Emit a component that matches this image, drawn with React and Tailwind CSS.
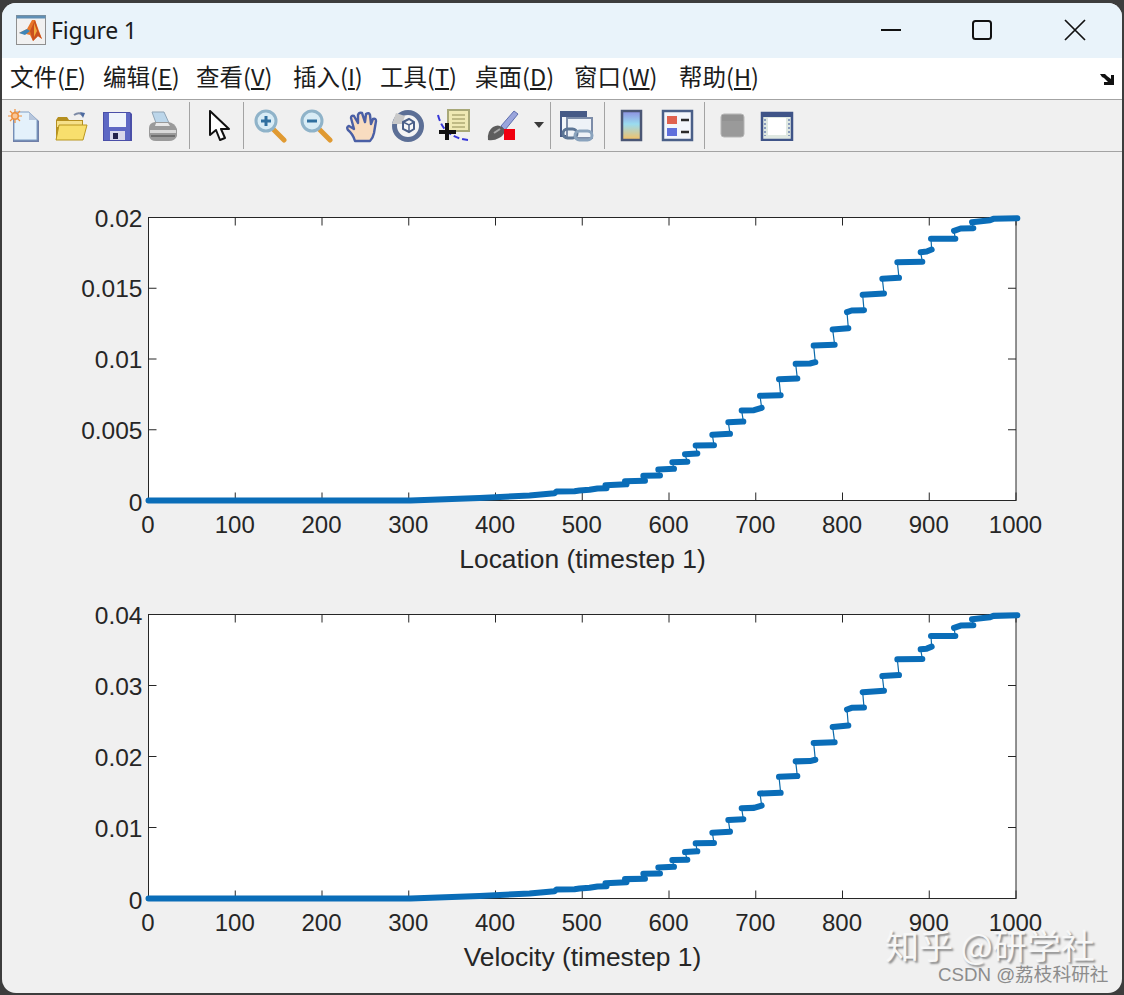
import React from 'react'

const boxW = 867.5

// step runs of the curve, measured off the picture
const upper = [
  [[75, 843], [135, 842]],
  [[130, 827], [180, 826]],
  [[175, 808], [222, 806]],
  [[217, 786], [262, 785]],
  [[255, 762], [292, 760]],
  [[287, 736], [342, 735]],
  [[337, 704], [390, 701]],
  [[385, 666], [430, 664]],
  [[425, 631], [462, 630], [485, 623]],
  [[480, 587], [542, 585]],
  [[537, 537], [592, 535]],
  [[587, 491], [630, 490], [646, 486]],
  [[641, 436], [704, 434]],
  [[698, 388], [745, 384]],
  [[741, 336], [755, 331], [792, 330]],
  [[788, 284], [852, 280]],
  [[847, 236], [897, 233]],
  [[892, 186], [967, 185]],
  [[962, 156], [980, 154], [995, 148]],
  [[993, 116], [1066, 116]],
  [[1062, 92], [1082, 85], [1120, 84]],
  [[1116, 66], [1170, 60], [1180, 56], [1252, 54]],
].map(run => run.map(([x, y]) => [x / 3 + 451.5, y / 3 - 17.3]))

const lower = [
  [[0, 283], [262, 283], [331, 280.6], [381, 277.9], [406, 275.7], [408, 274], [426, 273.7], [431, 273], [441, 272.3], [449, 271], [458, 270.8]],
  [[457, 267.8], [478, 266.8]],
]

const steps = [...lower, ...upper]

const toPoints = run => run.map(p => p.join(',')).join(' ')

function Plot({ labels, xlabel, top, height, boxH, xlabelX }) {
  const yTicks = [0, 1, 2, 3, 4].map(i => (i * boxH) / 4)
  const xTicks = [0, 100, 200, 300, 400, 500, 600, 700, 800, 900, 1000]
  const thin = steps.map(toPoints).join(' ')
  const sy = boxH / 283
  return (
    <svg width="1120" height={height} viewBox={`0 0 1120 ${height}`} className="block shrink-0">
      <g transform={`translate(146.5 ${top})`} style={{ fontFamily: '"Liberation Sans", Arial, sans-serif' }}>
        <rect x="0" y="0" width={boxW} height={boxH} fill="#ffffff" stroke="#262626" strokeWidth="1" />
        {xTicks.map(t => {
          const x = (t / 1000) * boxW
          return (
            <g key={t}>
              <path d={`M${x} 0v8M${x} ${boxH}v-8`} stroke="#262626" strokeWidth="1" />
              <text x={x - 0.5} y={boxH + 32.5} textAnchor="middle" fontSize="24" fill="#262626">{t}</text>
            </g>
          )
        })}
        {yTicks.map((y, i) => (
          <g key={i}>
            <path d={`M0 ${y}h8M${boxW} ${y}h-8`} stroke="#262626" strokeWidth="1" />
            <text x="-6" y={y + (i === 4 ? 10 : 9)} textAnchor="end" fontSize="24.5" fill="#262626">{labels[i]}</text>
          </g>
        ))}
        <text x={xlabelX} y={boxH + 67} textAnchor="middle" fontSize="26.4" fill="#262626">{xlabel}</text>
        <g transform={`scale(1 ${sy})`}>
          <polyline points={thin} fill="none" stroke="#0b6aaa" strokeWidth="1.2" />
          {steps.map((run, i) => (
            <polyline key={i} points={toPoints(run)} fill="none" stroke="#0a6db8" strokeWidth="6" strokeLinecap="round" strokeLinejoin="round" />
          ))}
        </g>
      </g>
    </svg>
  )
}

function MatlabLogo() {
  return (
    <svg width="30" height="30" viewBox="0 0 30 30">
      <rect x="0.5" y="0.5" width="29" height="29" fill="#f1f1f1" stroke="#8f8f8f" />
      <rect x="0.5" y="0.5" width="29" height="3" fill="#5f8fb5" />
      <path d="M3 18l8-4 5-9 3 0 7 19-4-3-5 5-3-6-4-1z" fill="#e8762a" />
      <path d="M3 18l8-4 3 2-5 4z" fill="#3f86b8" />
      <path d="M14 16l5-11 3 10 4 9-4-3-5 5z" fill="#c9501e" />
      <path d="M18 8l3 8-3 6z" fill="#f2a83c" />
    </svg>
  )
}

function NewIcon() {
  return (
    <svg width="34" height="34" viewBox="0 0 34 34">
      <path d="M5 4h17l9 8v21H5z" fill="#6f7fa8" />
      <path d="M6 3h15l8 8v20H6z" fill="#e4f1fb" stroke="#7f9fc5" />
      <path d="M21 3v8h8z" fill="#b7c6dc" />
      <circle cx="7" cy="7" r="4" fill="#ef8f3c" />
      <path d="M7 0v14M0 7h14M2 2l10 10M12 2L2 12" stroke="#ef8f3c" strokeWidth="1.2" />
      <circle cx="7" cy="7" r="2.5" fill="#f8c79a" />
    </svg>
  )
}

function OpenIcon() {
  return (
    <svg width="34" height="34" viewBox="0 0 34 34">
      <path d="M20 6q6-4 9 1" fill="none" stroke="#7d8aa5" strokeWidth="2" />
      <path d="M26 3l5 1-2 5z" fill="#4c6aa0" />
      <path d="M2 11l2-3h9l2 3h14v20H2z" fill="#b58f1f" />
      <path d="M3 12h25v6H3z" fill="#f6e08a" />
      <path d="M2 31l3-15h28l-4 15z" fill="#f8df6d" stroke="#b9961f" />
    </svg>
  )
}

function SaveIcon() {
  return (
    <svg width="32" height="32" viewBox="0 0 32 32">
      <path d="M2 2h27l2 2v27H2z" fill="#4a4fa8" />
      <path d="M3 3h26v27H3z" fill="#5d68c4" />
      <rect x="8" y="3" width="17" height="14" fill="#eef3fb" />
      <rect x="9" y="21" width="15" height="9" fill="#d8d8ea" />
      <rect x="12" y="23" width="5" height="6" fill="#23234a" />
    </svg>
  )
}

function PrintIcon() {
  return (
    <svg width="32" height="32" viewBox="0 0 32 32">
      <path d="M5 2h12l5 11H9z" fill="#bcd6ea" stroke="#8fa3b4" />
      <path d="M2 18q0-5 6-6h13q7 1 9 7v7q-2 5-8 5H9q-6 0-7-5z" fill="#9a9a9a" />
      <path d="M3 20h26v3H3z" fill="#d9d9d9" />
      <path d="M4 25h24v2H4z" fill="#6e6e6e" />
      <path d="M9 13h12l2 3H8z" fill="#e8e8e8" />
    </svg>
  )
}

function ArrowIcon() {
  return (
    <svg width="24" height="34" viewBox="0 0 24 34">
      <path d="M3 2v24l6-5 4 10 5-2-4-9h8z" fill="#ffffff" stroke="#111111" strokeWidth="2" strokeLinejoin="round" />
    </svg>
  )
}

function ZoomIcon({ minus }) {
  return (
    <svg width="34" height="34" viewBox="0 0 34 34">
      <path d="M20 20l11 11" stroke="#e09a32" strokeWidth="5" strokeLinecap="round" />
      <circle cx="13" cy="12" r="10" fill="#d8ecf6" stroke="#8fb3c9" strokeWidth="3" />
      <path d={minus ? 'M8 12h10' : 'M8 12h10M13 7v10'} stroke="#2f6f9f" strokeWidth="3" />
    </svg>
  )
}

function HandIcon() {
  return (
    <svg width="36" height="34" viewBox="0 0 34 34">
      <path d="M10 32q-2-7-7-11-2-3 1-4l5 3-3-11q0-3 3-2l4 7V6q1-3 4-2l3 9 1-8q3-2 4 1l1 9 2-5q3-1 3 2l-2 12q-1 5-4 8z" fill="#f8dcc0" stroke="#4a5fa5" strokeWidth="2.4" strokeLinejoin="round" />
    </svg>
  )
}

function RotateIcon() {
  return (
    <svg width="34" height="34" viewBox="0 0 34 34">
      <circle cx="17" cy="17" r="13.5" fill="#f4f4f4" stroke="#5c6f96" strokeWidth="5" />
      <path d="M1 15l4-11 9 3-3 8z" fill="#c9c9c9" />
      <path d="M12 13l6-3 5 3v7l-5 3-6-3z" fill="#f8f8f8" stroke="#4a5f88" strokeWidth="2" />
      <path d="M12 13l6 3 5-3M18 16v7" fill="none" stroke="#4a5f88" strokeWidth="1.5" />
    </svg>
  )
}

function CursorIcon() {
  return (
    <svg width="36" height="34" viewBox="0 0 36 34">
      <rect x="12" y="1" width="21" height="21" fill="#efe9b4" stroke="#a8a878" strokeWidth="2" />
      <path d="M16 6h13M16 10h13M16 14h13M16 18h13" stroke="#b0ab74" strokeWidth="1.5" />
      <path d="M2 6q3 12 11 18t19 7" fill="none" stroke="#3636d8" strokeWidth="2" strokeDasharray="6 3" />
      <path d="M11 14v17M3 23h17" stroke="#111111" strokeWidth="4" />
    </svg>
  )
}

function BrushIcon() {
  return (
    <svg width="36" height="34" viewBox="0 0 36 34">
      <path d="M17 17L30 2l4 3-13 16z" fill="#9aa5dc" stroke="#5f6fae" />
      <path d="M4 31q-1-9 5-13 5-3 9 0l3 3q-1 6-6 8-5 3-11 2z" fill="#5d5d5d" />
      <path d="M10 24l6-4" stroke="#a8a8a8" strokeWidth="2" />
      <rect x="20" y="20" width="11" height="11" fill="#f0000f" />
    </svg>
  )
}

function LinkIcon() {
  return (
    <svg width="34" height="34" viewBox="0 0 34 34">
      <rect x="1" y="3" width="25" height="24" fill="#f3f6fa" stroke="#465a86" strokeWidth="2" />
      <rect x="1" y="3" width="25" height="5" fill="#465a86" />
      <rect x="7" y="9" width="25" height="20" fill="#eef2f7" stroke="#7c8ca8" strokeWidth="2" />
      <rect x="3" y="20" width="14" height="9" rx="4.5" fill="none" stroke="#5d7696" strokeWidth="3" />
      <rect x="15" y="22" width="17" height="9" rx="4.5" fill="none" stroke="#8aa3bd" strokeWidth="3" />
    </svg>
  )
}

function ColorbarIcon() {
  return (
    <svg width="24" height="34" viewBox="0 0 24 34">
      <defs>
        <linearGradient id="cbar" x1="0" y1="0" x2="0" y2="1">
          <stop offset="0" stopColor="#8d8fe0" />
          <stop offset="0.45" stopColor="#9adcf0" />
          <stop offset="1" stopColor="#f6c062" />
        </linearGradient>
      </defs>
      <rect x="2" y="2" width="19" height="29" fill="url(#cbar)" stroke="#4a5674" strokeWidth="2.5" />
    </svg>
  )
}

function LegendIcon() {
  return (
    <svg width="34" height="34" viewBox="0 0 34 34">
      <rect x="2" y="2" width="29" height="29" fill="#f3f6fb" stroke="#4a5f88" strokeWidth="2.5" />
      <rect x="6" y="7" width="10" height="8" fill="#e0614f" />
      <rect x="6" y="19" width="10" height="8" fill="#5f6fdc" />
      <path d="M20 11h8M20 23h8" stroke="#2b2b2b" strokeWidth="2.5" />
    </svg>
  )
}

function HideIcon() {
  return (
    <svg width="26" height="26" viewBox="0 0 26 26">
      <rect x="1" y="1" width="23" height="23" rx="3" fill="#9a9a9a" stroke="#b5b5b5" />
      <rect x="2" y="2" width="21" height="6" fill="#929292" />
    </svg>
  )
}

function DockIcon() {
  return (
    <svg width="34" height="30" viewBox="0 0 34 30">
      <rect x="2" y="2" width="30" height="27" fill="#dfe8e2" stroke="#3f5488" strokeWidth="2.5" />
      <rect x="2" y="2" width="30" height="4" fill="#3f5488" />
      <rect x="8" y="7" width="18" height="17" fill="#ffffff" />
      <path d="M5 8v17M29 8v17" stroke="#8a9cbd" strokeWidth="2" strokeDasharray="2 2" />
    </svg>
  )
}

const Sep = ({ className }) => <div className={`w-px self-stretch my-[2px] bg-[#a3a3a3] ${className}`} />

const Tool = ({ children, className = '' }) => (
  <div className={`w-[46px] flex items-center justify-center blur-[0.4px] ${className}`}>{children}</div>
)

const menus = [
  ['文件', 'F', 'w-[76px]'],
  ['编辑', 'E', 'w-[76px]'],
  ['查看', 'V', 'w-[80px]'],
  ['插入', 'I', 'w-[70px]'],
  ['工具', 'T', 'w-[78px]'],
  ['桌面', 'D', 'w-[82px]'],
  ['窗口', 'W', 'w-[88px]'],
  ['帮助', 'H', 'w-[82px]'],
]

export default function App() {
  return (
    <div className="relative w-[1124px] h-[995px] bg-[#3d3d3d] pt-[3px] px-[2px] pb-[2px] overflow-hidden">
      <div className="h-full rounded-[14px] overflow-hidden flex flex-col bg-[#f0f0f0]">
        <div className="h-[55px] shrink-0 bg-[#e9f3fa] flex items-center pl-[14px] pb-[1px] pr-[1px]">
          <MatlabLogo />
          <span className="ml-[5px] text-[23px] tracking-[-0.2px] text-[#1a1a1a] font-['Noto_Sans',sans-serif]">Figure 1</span>
          <div className="ml-auto flex">
            <div className="w-[92px] flex justify-center">
              <svg width="22" height="22" viewBox="0 0 22 22"><path d="M1 11h20" stroke="#111" strokeWidth="2" /></svg>
            </div>
            <div className="w-[92px] flex justify-center pr-[3px]">
              <svg width="22" height="22" viewBox="0 0 22 22"><rect x="2" y="2" width="18" height="18" rx="2.5" fill="none" stroke="#111" strokeWidth="2" /></svg>
            </div>
            <div className="w-[92px] flex justify-center">
              <svg width="22" height="22" viewBox="0 0 22 22"><path d="M1 1l20 20M21 1L1 21" stroke="#111" strokeWidth="1.7" /></svg>
            </div>
          </div>
        </div>

        <div className="h-[41px] shrink-0 bg-white flex items-center pl-[8px] pr-[7px] pb-[3px] gap-[17px] text-[23.5px] text-[#1c1c1c] font-['Noto_Sans_CJK_SC','Noto_Sans',sans-serif]">
          {menus.map(([name, key, width]) => (
            <span key={key} className={`whitespace-nowrap ${width}`}>
              {name}(<u>{key}</u>)
            </span>
          ))}
          <svg className="ml-auto mt-[3px]" width="16" height="14" viewBox="0 0 16 14">
            <path d="M1 2h5l2 2 4 3V3h3v10H5v-3h4L5 6 3 5z" fill="#111" />
          </svg>
        </div>

        <div className="h-[53px] shrink-0 bg-[#f0f0f0] border-y border-[#a3a3a3] flex items-stretch">
          <Tool><NewIcon /></Tool>
          <Tool><OpenIcon /></Tool>
          <Tool><SaveIcon /></Tool>
          <Tool><PrintIcon /></Tool>
          <Sep className="ml-[3px] mr-[6px]" />
          <Tool><ArrowIcon /></Tool>
          <Sep className="ml-[1px] mr-[3px]" />
          <Tool><ZoomIcon /></Tool>
          <Tool><ZoomIcon minus /></Tool>
          <Tool><HandIcon /></Tool>
          <Tool><RotateIcon /></Tool>
          <Tool><CursorIcon /></Tool>
          <div className="w-[2px]" />
          <Tool><BrushIcon /></Tool>
          <div className="w-[24px] flex items-center justify-center pl-[4px] pb-[2px]">
            <svg width="10" height="6" viewBox="0 0 10 6"><path d="M0 0h10L5 6z" fill="#3a3a3a" /></svg>
          </div>
          <Sep className="ml-[1px] mr-[3px]" />
          <Tool><LinkIcon /></Tool>
          <Sep className="ml-[4px] mr-[4px]" />
          <Tool><ColorbarIcon /></Tool>
          <Tool><LegendIcon /></Tool>
          <Sep className="ml-[3px] mr-[5px]" />
          <Tool><HideIcon /></Tool>
          <Tool className="-ml-[2px]"><DockIcon /></Tool>
        </div>

        <div className="flex flex-col">
          <Plot labels={['0.02', '0.015', '0.01', '0.005', '0']} xlabel="Location (timestep 1)" top={65.5} height={440} boxH={283} xlabelX={434} />
          <Plot labels={['0.04', '0.03', '0.02', '0.01', '0']} xlabel="Velocity (timestep 1)" top={22.5} height={400} boxH={284} xlabelX={434} />
        </div>
      </div>

      <div className="absolute left-[885px] top-[923px] text-[34px] leading-[44px] whitespace-nowrap text-[#f7f7f7] [text-shadow:2px_2px_2px_#8a8a8a] font-['Noto_Sans_CJK_SC',sans-serif]">
        知乎 @研学社
      </div>
      <div className="absolute left-[938px] top-[962px] text-[18.7px] leading-[26px] whitespace-nowrap text-[#8c8c8c] font-['Liberation_Sans','Noto_Sans_CJK_SC',sans-serif]">
        CSDN @荔枝科研社
      </div>
    </div>
  )
}
